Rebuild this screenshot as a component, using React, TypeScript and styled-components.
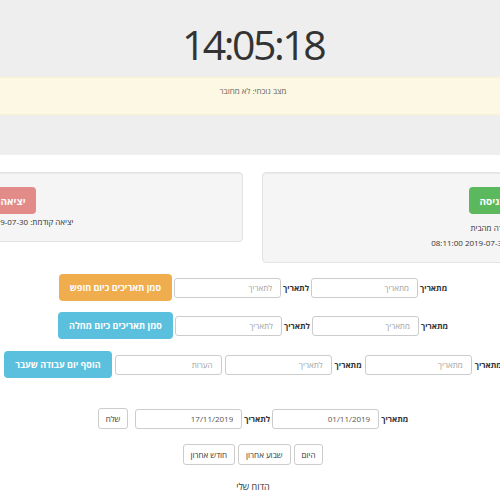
import styled, { createGlobalStyle } from 'styled-components';

const GlobalStyle = createGlobalStyle`
  html, body {
    margin: 0;
    padding: 0;
    background: #fff;
  }
  body {
    direction: rtl;
    font-family: "Open Sans", "DejaVu Sans", sans-serif;
    color: #333;
    overflow-x: hidden;
  }
`;

const Page = styled.div`
  width: 100%;
  overflow: hidden;
`;

const Header = styled.header`
  background: #eeeeee;
  height: 155px;
  box-sizing: border-box;
  padding-top: 20px;
`;

const Clock = styled.div`
  padding-left: 6px;
  font-size: 41px;
  line-height: 48px;
  font-weight: 400;
  letter-spacing: -2.5px;
  color: #333;
  text-align: center;
`;

const StatusBar = styled.div`
  margin-top: 9px;
  height: 38px;
  box-sizing: border-box;
  padding: 6px 0 0 6px;
  background: #fcf8e3;
  border-top: 1px solid #faf0d2;
  border-bottom: 1px solid #faf0d2;
  text-align: center;
  font-size: 8px;
  line-height: 14px;
  color: #6b655a;
`;

const PanelsRow = styled.div`
  display: flex;
  justify-content: center;
  align-items: flex-start;
  gap: 19px;
  margin-top: 17px;
  padding-left: 5px;
`;

const Well = styled.div`
  flex: 0 0 460px;
  box-sizing: border-box;
  background: #f5f5f5;
  border: 1px solid #e3e3e3;
  border-radius: 4px;
  box-shadow: inset 0 1px 1px rgba(0, 0, 0, 0.05);
  padding: 14px 10px 12px;
  text-align: center;
`;

const ActionButton = styled.button<{ $color: string; $disabled?: boolean; $big?: boolean }>`
  height: 27px;
  padding: 0 ${({ $big }) => ($big ? 9 : 10)}px;
  border: 1px solid transparent;
  border-radius: 4px;
  background: ${({ $color }) => $color};
  opacity: ${({ $disabled }) => ($disabled ? 0.65 : 1)};
  color: #fff;
  font-family: inherit;
  font-size: ${({ $big }) => ($big ? 10 : 9)}px;
  font-weight: 700;
  white-space: nowrap;
  cursor: pointer;
`;

const WellLine = styled.div<{ $gap?: number }>`
  margin-top: ${({ $gap }) => $gap ?? 0}px;
  font-size: 8px;
  line-height: 15px;
  color: #333;
  white-space: nowrap;
`;

const Form = styled.div`
  padding-left: 6px;
  margin-top: 11px;
`;

const FormRow = styled.div<{ $mt?: number; $gap?: number }>`
  display: flex;
  justify-content: center;
  align-items: center;
  gap: ${({ $gap }) => $gap ?? 2}px;
  margin-top: ${({ $mt }) => $mt ?? 0}px;
  height: 27px;
`;

const Label = styled.label`
  font-size: 8px;
  font-weight: 700;
  color: #333;
  white-space: nowrap;
`;

const Field = styled.input`
  width: 107px;
  height: 20px;
  box-sizing: border-box;
  border: 1px solid #cccccc;
  border-radius: 3px;
  padding: 0 8px;
  font-family: inherit;
  font-size: 8px;
  color: #555;
  text-align: right;
  direction: rtl;
  background: #fff;
  &::placeholder {
    color: #a0a0a0;
  }
`;

const PlainButton = styled.button<{ $offset?: number }>`
  height: 21px;
  padding: 0 7px;
  margin-right: ${({ $offset }) => $offset ?? 0}px;
  border: 1px solid #cccccc;
  border-radius: 3px;
  background: #fff;
  color: #333;
  font-family: inherit;
  font-size: 8px;
  white-space: nowrap;
  cursor: pointer;
`;

const ReportTitle = styled.div`
  padding-left: 6px;
  margin-top: 12px;
  text-align: center;
  font-size: 9px;
  color: #333;
`;

export default function App() {
  return (
    <Page>
      <GlobalStyle />
      <Header>
        <Clock>14:05:18</Clock>
        <StatusBar>מצב נוכחי: לא מחובר</StatusBar>
      </Header>

      <PanelsRow>
        <Well>
          <ActionButton $color="#5cb85c" $big>כניסה</ActionButton>
          <WellLine $gap={6}>עבודה מהבית</WellLine>
          <WellLine>כניסה קודמת: 2019-07-30 08:11:00</WellLine>
        </Well>
        <Well>
          <ActionButton $color="#d9534f" $disabled $big>יציאה</ActionButton>
          <WellLine>יציאה קודמת: 2019-07-30 17:02:00</WellLine>
        </Well>
      </PanelsRow>

      <Form>
        <FormRow>
          <Label>מתאריך</Label>
          <Field placeholder="מתאריך" />
          <Label>לתאריך</Label>
          <Field placeholder="לתאריך" />
          <ActionButton $color="#f0ad4e">סמן תאריכים כיום חופש</ActionButton>
        </FormRow>
        <FormRow $mt={11}>
          <Label>מתאריך</Label>
          <Field placeholder="מתאריך" />
          <Label>לתאריך</Label>
          <Field placeholder="לתאריך" />
          <ActionButton $color="#5bc0de">סמן תאריכים כיום מחלה</ActionButton>
        </FormRow>
        <FormRow $mt={12} $gap={3}>
          <Label>מתאריך</Label>
          <Field placeholder="מתאריך" />
          <Label>מתאריך</Label>
          <Field placeholder="לתאריך" />
          <Field placeholder="הערות" />
          <ActionButton $color="#5bc0de">הוסף יום עבודה שעבר</ActionButton>
        </FormRow>
        <FormRow $mt={27}>
          <Label>מתאריך</Label>
          <Field defaultValue="01/11/2019" />
          <Label>לתאריך</Label>
          <Field defaultValue="17/11/2019" />
          <PlainButton $offset={5}>שלח</PlainButton>
        </FormRow>
        <FormRow $mt={9} $gap={3}>
          <PlainButton>היום</PlainButton>
          <PlainButton>שבוע אחרון</PlainButton>
          <PlainButton>חודש אחרון</PlainButton>
        </FormRow>
      </Form>

      <ReportTitle>הדוח שלי</ReportTitle>
    </Page>
  );
}
